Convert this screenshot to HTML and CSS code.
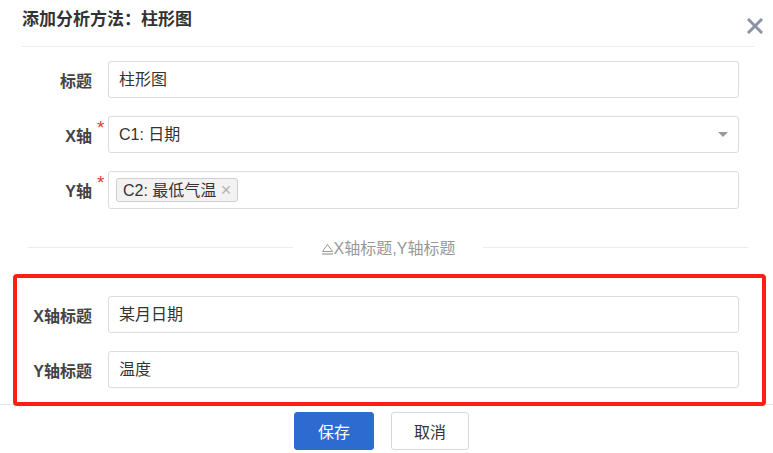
FILE: index.html
```html
<!DOCTYPE html>
<html lang="zh-CN">
<head>
  <meta charset="UTF-8">
  <title>添加分析方法</title>
  <link rel="stylesheet" href="styles.css">
</head>
<body>
  <div class="header">
    <div class="title">添加分析方法：柱形图</div>
    <svg class="close" width="16" height="16" viewBox="0 0 16 16">
      <path d="M2 2 L14 14 M14 2 L2 14" stroke="#8a93a6" stroke-width="3" stroke-linecap="square" fill="none"/>
    </svg>
  </div>

  <div class="form">
    <div class="row">
      <label>标题</label>
      <span class="star"></span>
      <div class="field">柱形图</div>
    </div>
    <div class="row">
      <label>X轴</label>
      <span class="star">*</span>
      <div class="field select">
        <span>C1: 日期</span>
        <i class="caret"></i>
      </div>
    </div>
    <div class="row">
      <label>Y轴</label>
      <span class="star">*</span>
      <div class="field tags">
        <span class="tag">C2: 最低气温 <b>×</b></span>
      </div>
    </div>

    <div class="divider">
      <span class="line"></span>
      <span class="divider-text">
        <svg width="13" height="12" viewBox="0 0 13 12">
          <path d="M6.5 1.5 L11.5 8.5 L1.5 8.5 Z" stroke="#999" stroke-width="1" fill="none"/>
          <path d="M1 11 L12 11" stroke="#999" stroke-width="1.2"/>
        </svg>X轴标题,Y轴标题
      </span>
      <span class="line"></span>
    </div>
  </div>

  <div class="highlight">
    <div class="row">
      <label>X轴标题</label>
      <span class="star"></span>
      <div class="field">某月日期</div>
    </div>
    <div class="row">
      <label>Y轴标题</label>
      <span class="star"></span>
      <div class="field">温度</div>
    </div>
  </div>

  <div class="footer">
    <button class="btn primary">保存</button>
    <button class="btn">取消</button>
  </div>
</body>
</html>
```

FILE: styles.css
```css
body {
  margin: 0;
  font-family: "Liberation Sans", "Noto Sans CJK SC", sans-serif;
  background-color: #fff;
  color: #333;
}

.header {
  display: flex;
  padding: 8px 10px 0 22px;
}

.title {
  flex: 1;
  height: 38px;
  line-height: 24px;
  font-size: 17px;
  font-weight: bold;
  color: #333;
  border-bottom: 1px solid #ebebeb;
}

.close {
  margin-top: 10px;
  margin-left: -7px;
}

.form {
  padding: 14px 34px 0 0;
}

.row {
  display: grid;
  grid-template-columns: 92px 16px 1fr;
  align-items: center;
  margin-bottom: 18px;
}

.row label {
  text-align: right;
  font-size: 16px;
  font-weight: bold;
  color: #444;
}

.star {
  align-self: start;
  padding: 3px 0 0 5px;
  color: #e8363a;
  font-size: 19px;
  line-height: 17px;
}

.field {
  height: 37px;
  box-sizing: border-box;
  border: 1px solid #dcdcdc;
  border-radius: 3px;
  padding: 0 10px;
  font-size: 16px;
  line-height: 35px;
  color: #333;
}

.select {
  display: flex;
  justify-content: space-between;
  align-items: center;
}

.caret {
  width: 0;
  height: 0;
  border-left: 5px solid transparent;
  border-right: 5px solid transparent;
  border-top: 5px solid #999;
}

.tags {
  height: 38px;
  padding: 0 7px;
  display: flex;
  align-items: center;
}

.tag {
  height: 24px;
  box-sizing: border-box;
  line-height: 22px;
  padding: 0 6px;
  background-color: #f2f2f2;
  border: 1px solid #cfcfcf;
  border-radius: 3px;
}

.tag b {
  font-weight: normal;
  font-size: 18px;
  color: #b3b3b3;
}

.divider {
  display: flex;
  align-items: center;
  height: 40px;
  margin: 0 -9px 7px 28px;
}

.divider .line {
  flex: 1;
  height: 1px;
  background-color: #ececec;
}

.divider-text {
  padding: 0 28px;
  font-size: 16px;
  color: #999;
}

.divider-text svg {
  vertical-align: -1px;
}

.highlight {
  position: relative;
  margin: 0 7px -2px 13px;
  padding: 18px 23px 14px 0;
  border: 4px solid #ff1e14;
  border-radius: 4px;
}

.highlight .row {
  grid-template-columns: 75px 16px 1fr;
}

.highlight .row:last-child {
  margin-bottom: 0;
}

.footer {
  display: flex;
  justify-content: center;
  gap: 17px;
  padding: 7px 10px 0 0;
  border-top: 1px solid #e5e5ea;
}

.btn {
  width: 78px;
  height: 38px;
  border: 1px solid #d6d9e0;
  border-radius: 3px;
  background-color: #fff;
  color: #333;
  font-family: inherit;
  font-size: 16px;
}

.btn.primary {
  width: 80px;
  border-color: #2d6bd0;
  background-color: #2d6bd0;
  color: #fff;
}
```
